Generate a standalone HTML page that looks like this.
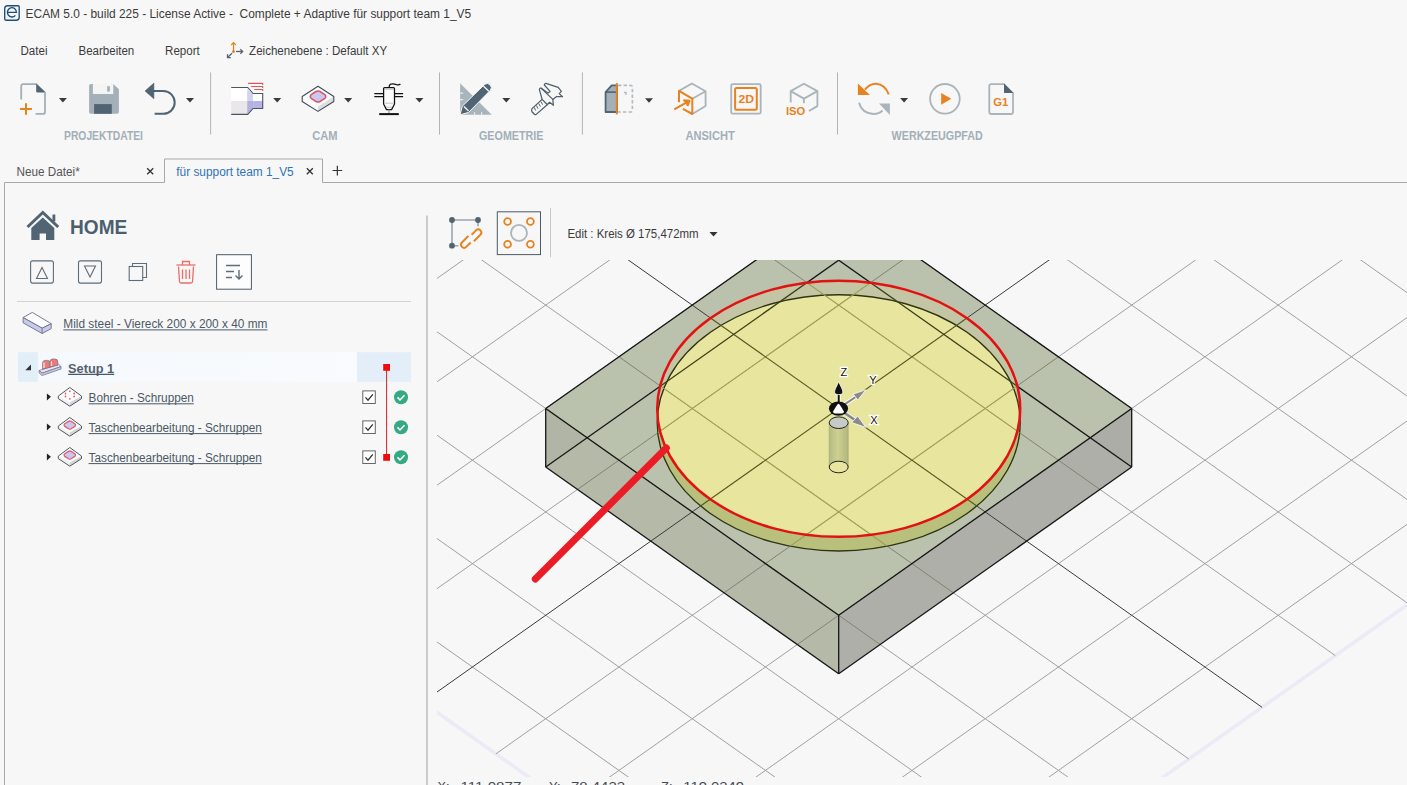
<!DOCTYPE html>
<html><head><meta charset="utf-8"><title>ECAM</title>
<style>
html,body{margin:0;padding:0;}
body{width:1407px;height:785px;overflow:hidden;background:#f7f7f7;position:relative;font-family:"Liberation Sans",sans-serif;}
svg{position:absolute;left:0;top:0;}
text{font-family:"Liberation Sans",sans-serif;}
</style></head>
<body>
<svg width="1407" height="785" viewBox="0 0 1407 785">
<defs>
<linearGradient id="cylg" x1="0" x2="1" y1="0" y2="0">
<stop offset="0" stop-color="#b5bb80"/><stop offset="0.45" stop-color="#cdd092"/><stop offset="1" stop-color="#b2b77c"/>
</linearGradient>
<linearGradient id="setupg" x1="0" x2="1" y1="0" y2="0">
<stop offset="0" stop-color="#f5f9fd"/><stop offset="1" stop-color="#f9fbfe"/>
</linearGradient>
</defs>
<defs>
<clipPath id="vp"><rect x="437" y="260" width="970" height="517"/></clipPath>
<clipPath id="boxsil"><polygon points="545.70,408.50 838.70,201.70 1131.70,408.50 1131.70,467.00 838.70,673.80 545.70,467.00"/></clipPath>
<clipPath id="redc"><ellipse cx="838.7" cy="408.75" rx="181.5" ry="128.1"/></clipPath>
<clipPath id="pock"><ellipse cx="838.7" cy="408.75" rx="181.5" ry="128.1"/><ellipse cx="838.7" cy="422.85" rx="181.5" ry="128.1"/></clipPath>
<mask id="nopock" maskUnits="userSpaceOnUse" x="0" y="0" width="1407" height="785"><rect x="0" y="0" width="1407" height="785" fill="#fff"/><ellipse cx="838.7" cy="408.75" rx="181.5" ry="128.1" fill="#000"/><ellipse cx="838.7" cy="422.85" rx="181.5" ry="128.1" fill="#000"/></mask>
</defs>
<g clip-path="url(#vp)">
<line x1="2.92" y1="405.91" x2="846.03" y2="1000.98" stroke="#ebebf7" stroke-width="3.6" />
<line x1="846.03" y1="1000.98" x2="1681.81" y2="411.08" stroke="#ebebf7" stroke-width="3.6" />
<line x1="52.73" y1="370.76" x2="895.84" y2="965.83" stroke="#a0a0a0" stroke-width="1.0" />
<line x1="125.98" y1="319.06" x2="969.09" y2="914.13" stroke="#a0a0a0" stroke-width="1.0" />
<line x1="199.23" y1="267.36" x2="1042.34" y2="862.43" stroke="#a0a0a0" stroke-width="1.0" />
<line x1="272.48" y1="215.66" x2="1115.59" y2="810.73" stroke="#a0a0a0" stroke-width="1.0" />
<line x1="345.73" y1="163.96" x2="1188.84" y2="759.03" stroke="#a0a0a0" stroke-width="1.0" />
<line x1="492.23" y1="60.56" x2="1335.34" y2="655.63" stroke="#a0a0a0" stroke-width="1.0" />
<line x1="565.48" y1="8.86" x2="1408.59" y2="603.93" stroke="#a0a0a0" stroke-width="1.0" />
<line x1="638.73" y1="-42.84" x2="1481.84" y2="552.23" stroke="#a0a0a0" stroke-width="1.0" />
<line x1="711.98" y1="-94.54" x2="1555.09" y2="500.53" stroke="#a0a0a0" stroke-width="1.0" />
<line x1="785.23" y1="-146.24" x2="1628.34" y2="448.83" stroke="#a0a0a0" stroke-width="1.0" />
<line x1="56.39" y1="443.66" x2="892.17" y2="-146.24" stroke="#a0a0a0" stroke-width="1.0" />
<line x1="129.64" y1="495.36" x2="965.42" y2="-94.54" stroke="#a0a0a0" stroke-width="1.0" />
<line x1="202.89" y1="547.06" x2="1038.67" y2="-42.84" stroke="#a0a0a0" stroke-width="1.0" />
<line x1="276.14" y1="598.76" x2="1111.92" y2="8.86" stroke="#a0a0a0" stroke-width="1.0" />
<line x1="349.39" y1="650.46" x2="1185.17" y2="60.56" stroke="#a0a0a0" stroke-width="1.0" />
<line x1="495.89" y1="753.86" x2="1331.67" y2="163.96" stroke="#a0a0a0" stroke-width="1.0" />
<line x1="569.14" y1="805.56" x2="1404.92" y2="215.66" stroke="#a0a0a0" stroke-width="1.0" />
<line x1="642.39" y1="857.26" x2="1478.17" y2="267.36" stroke="#a0a0a0" stroke-width="1.0" />
<line x1="715.64" y1="908.96" x2="1551.42" y2="319.06" stroke="#a0a0a0" stroke-width="1.0" />
<line x1="788.89" y1="960.66" x2="1624.67" y2="370.76" stroke="#a0a0a0" stroke-width="1.0" />
<polygon points="545.70,408.50 838.70,201.70 1131.70,408.50 838.70,615.30" fill="#bac1ac" />
<polygon points="545.70,408.50 838.70,615.30 838.70,673.80 545.70,467.00" fill="#b5baa8" />
<polygon points="545.70,408.50 587.14,437.75 545.70,467.00" fill="#b1b5a5" />
<polygon points="838.70,615.30 1131.70,408.50 1131.70,467.00 838.70,673.80" fill="#afafa9" />
<polygon points="1131.70,408.50 1090.26,437.75 1131.70,467.00" fill="#adada7" />
<g clip-path="url(#boxsil)"><line x1="52.73" y1="370.76" x2="895.84" y2="965.83" stroke="#80846f" stroke-width="1" />
<line x1="125.98" y1="319.06" x2="969.09" y2="914.13" stroke="#80846f" stroke-width="1" />
<line x1="199.23" y1="267.36" x2="1042.34" y2="862.43" stroke="#80846f" stroke-width="1" />
<line x1="272.48" y1="215.66" x2="1115.59" y2="810.73" stroke="#80846f" stroke-width="1" />
<line x1="345.73" y1="163.96" x2="1188.84" y2="759.03" stroke="#80846f" stroke-width="1" />
<line x1="492.23" y1="60.56" x2="1335.34" y2="655.63" stroke="#80846f" stroke-width="1" />
<line x1="565.48" y1="8.86" x2="1408.59" y2="603.93" stroke="#80846f" stroke-width="1" />
<line x1="638.73" y1="-42.84" x2="1481.84" y2="552.23" stroke="#80846f" stroke-width="1" />
<line x1="711.98" y1="-94.54" x2="1555.09" y2="500.53" stroke="#80846f" stroke-width="1" />
<line x1="785.23" y1="-146.24" x2="1628.34" y2="448.83" stroke="#80846f" stroke-width="1" />
<line x1="56.39" y1="443.66" x2="892.17" y2="-146.24" stroke="#80846f" stroke-width="1" />
<line x1="129.64" y1="495.36" x2="965.42" y2="-94.54" stroke="#80846f" stroke-width="1" />
<line x1="202.89" y1="547.06" x2="1038.67" y2="-42.84" stroke="#80846f" stroke-width="1" />
<line x1="276.14" y1="598.76" x2="1111.92" y2="8.86" stroke="#80846f" stroke-width="1" />
<line x1="349.39" y1="650.46" x2="1185.17" y2="60.56" stroke="#80846f" stroke-width="1" />
<line x1="495.89" y1="753.86" x2="1331.67" y2="163.96" stroke="#80846f" stroke-width="1" />
<line x1="569.14" y1="805.56" x2="1404.92" y2="215.66" stroke="#80846f" stroke-width="1" />
<line x1="642.39" y1="857.26" x2="1478.17" y2="267.36" stroke="#80846f" stroke-width="1" />
<line x1="715.64" y1="908.96" x2="1551.42" y2="319.06" stroke="#80846f" stroke-width="1" />
<line x1="788.89" y1="960.66" x2="1624.67" y2="370.76" stroke="#80846f" stroke-width="1" /></g>
<ellipse cx="838.7" cy="408.75" rx="181.5" ry="128.1" fill="#c3c5a4"/>
<ellipse cx="838.7" cy="422.85" rx="181.5" ry="128.1" fill="#b8c07c"/>
<g clip-path="url(#redc)"><ellipse cx="838.7" cy="422.85" rx="181.5" ry="128.1" fill="#e8e69e"/></g>
<g clip-path="url(#pock)"><line x1="52.73" y1="370.76" x2="895.84" y2="965.83" stroke="#adad70" stroke-width="1" />
<line x1="125.98" y1="319.06" x2="969.09" y2="914.13" stroke="#adad70" stroke-width="1" />
<line x1="199.23" y1="267.36" x2="1042.34" y2="862.43" stroke="#adad70" stroke-width="1" />
<line x1="272.48" y1="215.66" x2="1115.59" y2="810.73" stroke="#adad70" stroke-width="1" />
<line x1="345.73" y1="163.96" x2="1188.84" y2="759.03" stroke="#adad70" stroke-width="1" />
<line x1="492.23" y1="60.56" x2="1335.34" y2="655.63" stroke="#adad70" stroke-width="1" />
<line x1="565.48" y1="8.86" x2="1408.59" y2="603.93" stroke="#adad70" stroke-width="1" />
<line x1="638.73" y1="-42.84" x2="1481.84" y2="552.23" stroke="#adad70" stroke-width="1" />
<line x1="711.98" y1="-94.54" x2="1555.09" y2="500.53" stroke="#adad70" stroke-width="1" />
<line x1="785.23" y1="-146.24" x2="1628.34" y2="448.83" stroke="#adad70" stroke-width="1" />
<line x1="56.39" y1="443.66" x2="892.17" y2="-146.24" stroke="#adad70" stroke-width="1" />
<line x1="129.64" y1="495.36" x2="965.42" y2="-94.54" stroke="#adad70" stroke-width="1" />
<line x1="202.89" y1="547.06" x2="1038.67" y2="-42.84" stroke="#adad70" stroke-width="1" />
<line x1="276.14" y1="598.76" x2="1111.92" y2="8.86" stroke="#adad70" stroke-width="1" />
<line x1="349.39" y1="650.46" x2="1185.17" y2="60.56" stroke="#adad70" stroke-width="1" />
<line x1="495.89" y1="753.86" x2="1331.67" y2="163.96" stroke="#adad70" stroke-width="1" />
<line x1="569.14" y1="805.56" x2="1404.92" y2="215.66" stroke="#adad70" stroke-width="1" />
<line x1="642.39" y1="857.26" x2="1478.17" y2="267.36" stroke="#adad70" stroke-width="1" />
<line x1="715.64" y1="908.96" x2="1551.42" y2="319.06" stroke="#adad70" stroke-width="1" />
<line x1="788.89" y1="960.66" x2="1624.67" y2="370.76" stroke="#adad70" stroke-width="1" /></g>
<ellipse cx="838.7" cy="422.85" rx="181.5" ry="128.1" fill="none" stroke="#2f3412" stroke-width="1.35"/>
<g mask="url(#nopock)"><line x1="418.98" y1="112.26" x2="1262.09" y2="707.33" stroke="#3a3a3a" stroke-width="1.0" />
<line x1="422.64" y1="702.16" x2="1258.42" y2="112.26" stroke="#3a3a3a" stroke-width="1.0" /></g>
<line x1="545.70" y1="408.50" x2="838.70" y2="201.70" stroke="#161616" stroke-width="1.3" />
<line x1="838.70" y1="201.70" x2="1131.70" y2="408.50" stroke="#161616" stroke-width="1.3" />
<line x1="1131.70" y1="408.50" x2="838.70" y2="615.30" stroke="#161616" stroke-width="1.3" />
<line x1="838.70" y1="615.30" x2="545.70" y2="408.50" stroke="#161616" stroke-width="1.3" />
<line x1="1131.70" y1="467.00" x2="838.70" y2="673.80" stroke="#161616" stroke-width="1.3" />
<line x1="838.70" y1="673.80" x2="545.70" y2="467.00" stroke="#161616" stroke-width="1.3" />
<line x1="545.70" y1="408.50" x2="545.70" y2="467.00" stroke="#161616" stroke-width="1.3" />
<line x1="1131.70" y1="408.50" x2="1131.70" y2="467.00" stroke="#161616" stroke-width="1.3" />
<line x1="838.70" y1="615.30" x2="838.70" y2="673.80" stroke="#161616" stroke-width="1.3" />
<line x1="838.70" y1="201.70" x2="838.70" y2="260.20" stroke="#161616" stroke-width="1.3" />
<g mask="url(#nopock)"><line x1="545.70" y1="467.00" x2="838.70" y2="260.20" stroke="#161616" stroke-width="1.3" /><line x1="838.70" y1="260.20" x2="1131.70" y2="467.00" stroke="#161616" stroke-width="1.3" /></g>
<g clip-path="url(#pock)">
<line x1="52.73" y1="370.76" x2="895.84" y2="965.83" stroke="#a0a158" stroke-width="1.1" />
<line x1="125.98" y1="319.06" x2="969.09" y2="914.13" stroke="#a0a158" stroke-width="1.1" />
<line x1="199.23" y1="267.36" x2="1042.34" y2="862.43" stroke="#a0a158" stroke-width="1.1" />
<line x1="272.48" y1="215.66" x2="1115.59" y2="810.73" stroke="#a0a158" stroke-width="1.1" />
<line x1="345.73" y1="163.96" x2="1188.84" y2="759.03" stroke="#a0a158" stroke-width="1.1" />
<line x1="492.23" y1="60.56" x2="1335.34" y2="655.63" stroke="#a0a158" stroke-width="1.1" />
<line x1="565.48" y1="8.86" x2="1408.59" y2="603.93" stroke="#a0a158" stroke-width="1.1" />
<line x1="638.73" y1="-42.84" x2="1481.84" y2="552.23" stroke="#a0a158" stroke-width="1.1" />
<line x1="711.98" y1="-94.54" x2="1555.09" y2="500.53" stroke="#a0a158" stroke-width="1.1" />
<line x1="785.23" y1="-146.24" x2="1628.34" y2="448.83" stroke="#a0a158" stroke-width="1.1" />
<line x1="56.39" y1="443.66" x2="892.17" y2="-146.24" stroke="#a0a158" stroke-width="1.1" />
<line x1="129.64" y1="495.36" x2="965.42" y2="-94.54" stroke="#a0a158" stroke-width="1.1" />
<line x1="202.89" y1="547.06" x2="1038.67" y2="-42.84" stroke="#a0a158" stroke-width="1.1" />
<line x1="276.14" y1="598.76" x2="1111.92" y2="8.86" stroke="#a0a158" stroke-width="1.1" />
<line x1="349.39" y1="650.46" x2="1185.17" y2="60.56" stroke="#a0a158" stroke-width="1.1" />
<line x1="495.89" y1="753.86" x2="1331.67" y2="163.96" stroke="#a0a158" stroke-width="1.1" />
<line x1="569.14" y1="805.56" x2="1404.92" y2="215.66" stroke="#a0a158" stroke-width="1.1" />
<line x1="642.39" y1="857.26" x2="1478.17" y2="267.36" stroke="#a0a158" stroke-width="1.1" />
<line x1="715.64" y1="908.96" x2="1551.42" y2="319.06" stroke="#a0a158" stroke-width="1.1" />
<line x1="788.89" y1="960.66" x2="1624.67" y2="370.76" stroke="#a0a158" stroke-width="1.1" />
<line x1="418.98" y1="112.26" x2="1262.09" y2="707.33" stroke="#55561f" stroke-width="1.15" />
<line x1="422.64" y1="702.16" x2="1258.42" y2="112.26" stroke="#55561f" stroke-width="1.15" />
<line x1="545.70" y1="467.00" x2="838.70" y2="260.20" stroke="#3c3d16" stroke-width="1.3" />
<line x1="838.70" y1="260.20" x2="1131.70" y2="467.00" stroke="#3c3d16" stroke-width="1.3" />
</g>
<ellipse cx="838.7" cy="408.75" rx="181.5" ry="128.1" fill="none" stroke="#e31212" stroke-width="2.5"/>
<rect x="829.2" y="422.7" width="19" height="44.3" fill="url(#cylg)"/>
<line x1="829.2" y1="422.7" x2="829.2" y2="467" stroke="#9da070" stroke-width="0.6"/>
<line x1="848.2" y1="422.7" x2="848.2" y2="467" stroke="#9da070" stroke-width="0.6"/>
<ellipse cx="838.7" cy="467" rx="9.5" ry="5.8" fill="#e8e69e" stroke="#222" stroke-width="1"/>
<ellipse cx="838.7" cy="422.7" rx="9.5" ry="5.8" fill="#c7cbc6" stroke="#222" stroke-width="1"/>
<line x1="842.7" y1="405.6" x2="857.7" y2="395.6" stroke="#fff" stroke-width="4"/>
<line x1="842.7" y1="405.6" x2="857.7" y2="395.6" stroke="#888" stroke-width="2"/>
<polygon points="865.9000000000001,389.8 853.2,394.1 857.7,400.1" fill="#8a8a8a" stroke="#fff" stroke-width="0.8"/>
<line x1="842.7" y1="411.6" x2="855.7" y2="420.6" stroke="#fff" stroke-width="4"/>
<line x1="842.7" y1="411.6" x2="855.7" y2="420.6" stroke="#888" stroke-width="2.5"/>
<polygon points="865.9000000000001,427.40000000000003 851.7,422.6 857.7,416.1" fill="#8a8a8a" stroke="#fff" stroke-width="0.8"/>
<line x1="838.7" y1="404.6" x2="838.7" y2="392.6" stroke="#fff" stroke-width="4"/>
<line x1="838.7" y1="404.6" x2="838.7" y2="392.6" stroke="#111" stroke-width="2"/>
<path d="M838.7,381.6 C840.2,385.6 842.9000000000001,389.6 842.9000000000001,392.1 C842.9000000000001,394.1 840.7,394.6 838.7,394.6 C836.7,394.6 834.5,394.1 834.5,392.1 C834.5,389.6 837.2,385.6 838.7,381.6Z" fill="#111" stroke="#fff" stroke-width="0.8"/>
<ellipse cx="838.5" cy="408.6" rx="9.6" ry="7.2" fill="#111"/>
<path d="M838.5,403.8 Q839.7,404.0 843.9000000000001,411.6 Q844.2,413.20000000000005 842.2,413.40000000000003 H834.8000000000001 Q832.8000000000001,413.20000000000005 833.1,411.6 Q837.3000000000001,404.0 838.5,403.8 Z" fill="#fff"/>
<text x="840.5" y="376.1" font-family="Liberation Sans" font-size="11" fill="#111" stroke="#fff" stroke-width="2.5" paint-order="stroke">Z</text>
<text x="869.2" y="384.3" font-family="Liberation Sans" font-size="11" fill="#111" stroke="#fff" stroke-width="2.5" paint-order="stroke">Y</text>
<text x="870.2" y="423.6" font-family="Liberation Sans" font-size="11" fill="#111" stroke="#fff" stroke-width="2.5" paint-order="stroke">X</text>
<line x1="535.3" y1="579" x2="666.3" y2="448" stroke="#ec1c26" stroke-width="7" stroke-linecap="round"/>
</g>
<line x1="210.6" y1="72.4" x2="210.6" y2="134.6" stroke="#b4b4b4" stroke-width="1"/><line x1="439.5" y1="72.4" x2="439.5" y2="134.6" stroke="#b4b4b4" stroke-width="1"/><line x1="582.4" y1="72.4" x2="582.4" y2="134.6" stroke="#b4b4b4" stroke-width="1"/><line x1="837.5" y1="72.4" x2="837.5" y2="134.6" stroke="#b4b4b4" stroke-width="1"/><path d="M4.5,785 V182.5 H164.5 V159 H322.5 V182.5 H1407" fill="none" stroke="#a8a8a8" stroke-width="1"/><path d="M147.2,168.3 L153.2,174.3 M153.2,168.3 L147.2,174.3" stroke="#333" stroke-width="1.3"/><path d="M306.8,168.3 L312.8,174.3 M312.8,168.3 L306.8,174.3" stroke="#333" stroke-width="1.3"/><path d="M332.5,170.5 H342.2 M337.35,165.7 V175.4" stroke="#333" stroke-width="1.2"/><line x1="427" y1="215.4" x2="427" y2="785" stroke="#c0c0c0" stroke-width="1.6"/>
<g fill="none" stroke="#1b4f7a" stroke-width="1.35"><path d="M7.6,5.7 H18.1 Q19.2,5.7 19.2,6.8 V17.2 Q19.2,20.2 16.2,20.2 H5.8 Q4.7,20.2 4.7,19.1 V8.6 Q4.7,5.7 7.6,5.7 Z"/><path d="M7.4,12.4 H16.4 A4.5,4.7 0 1 0 15.4,15.3"/></g>
<g fill="none" stroke-width="1.2"><line x1="233.5" y1="43" x2="233.5" y2="51.5" stroke="#e8811f"/><polyline points="231.2,45 233.5,42.6 235.8,45" stroke="#e8811f"/><circle cx="233.5" cy="51.5" r="1.5" fill="#e8811f" stroke="none"/><line x1="236" y1="51.5" x2="242.5" y2="51.5" stroke="#55646f" stroke-width="1.3"/><polyline points="240.3,49.3 242.6,51.5 240.3,53.7" stroke="#55646f" stroke-width="1.3"/><line x1="232" y1="53.2" x2="227.8" y2="57.3" stroke="#55646f"/><polyline points="227.5,54.3 227.5,57.6 230.8,57.6" stroke="#55646f" stroke-width="1.3"/></g>
<g><path d="M21.2,99.4 V86.2 Q21.2,84.2 23.2,84.2 H36.5" fill="none" stroke="#a3afb7" stroke-width="1.8"/><path d="M36.2,83.3 L45.8,92.6 H37.6 Q36.2,92.6 36.2,91.2 Z" fill="#506473"/><path d="M45,92 V111.9 Q45,113.9 43,113.9 H35.6" fill="none" stroke="#a3afb7" stroke-width="1.8"/><path d="M20.1,108.9 H31.9 M26,103.2 V114.7" stroke="#e8811f" stroke-width="2"/></g>
<polygon points="58.9,98 66.9,98 62.9,102.5" fill="#3a3a3a"/>
<g><path d="M90.8,84 H113.3 L118.9,89.3 V112 Q118.9,113.8 117.1,113.8 H90.9 Q89.1,113.8 89.1,112 V85.8 Q89.1,84 90.8,84 Z" fill="#a4b0b8"/><rect x="92.9" y="84" width="20.4" height="10" fill="#f4f4f4"/><rect x="107.2" y="86.2" width="2.7" height="5.4" fill="#a4b0b8"/><rect x="94.1" y="104.1" width="17.7" height="9.7" fill="#506473"/></g>
<g><path d="M152.5,91 H163.3 A11.4,11.4 0 0 1 163.3,113.8 H154.6" fill="none" stroke="#506473" stroke-width="2"/><path d="M145,91 L153.9,83.1 V98.8 Z" fill="#506473" stroke="#506473" stroke-width="0.6" stroke-linejoin="round"/></g>
<polygon points="186,98 194,98 190,102.5" fill="#3a3a3a"/>
<g><rect x="231.2" y="87.5" width="16" height="13.5" fill="#ffffff"/><rect x="231.2" y="101" width="16" height="13.4" fill="#e9e7ea"/><path d="M247.2,89.5 L253.1,94 V101 H247.2 Z" fill="#d4d3ef"/><path d="M247.2,101 H253.1 V108.5 L247.2,114 Z" fill="#b3b1e2"/><rect x="253.1" y="93.5" width="9.6" height="7.5" fill="#ffffff"/><rect x="253.1" y="101" width="9.6" height="7.5" fill="#b6b4e6"/><path d="M231.2,87.5 H247.7 L253.1,93.5 H262.7 V108.5 H253.1 L247.7,114.4 H231.2" fill="none" stroke="#4a5662" stroke-width="1.1"/><path d="M248,83.4 H262.7 V85 M251.2,86.5 H262.7 V88 M254.2,89.5 H262.7 V91" fill="none" stroke="#d85a5a" stroke-width="1.1"/></g>
<polygon points="273.2,98 281.2,98 277.2,102.5" fill="#3a3a3a"/>
<g><path d="M318,86.3 L333.8,96.5 V101.5 L318,111.4 L302.2,101.5 V96.5 Z" fill="#fefefe"/><path d="M318,106.6 L333.8,96.5 V101.5 L318,111.4 Z" fill="#dedede"/><path d="M318,86.3 L333.8,96.5 V101.5 L318,111.4 L302.2,101.5 V96.5 Z" fill="none" stroke="#3f4b56" stroke-width="1.1" stroke-linejoin="round"/><path d="M311.2,94.5 Q309.2,96.5 311.2,98.5 L316,101.5 Q318,102.6 320,101.5 L324.8,98.5 Q326.8,96.5 324.8,94.5 L320,91.5 Q318,90.3 316,91.5 Z" fill="#c9c8f0" stroke="#e05566" stroke-width="1.5"/></g>
<polygon points="344.2,98 352.2,98 348.2,102.5" fill="#3a3a3a"/>
<g fill="none" stroke="#111" stroke-width="1.25" stroke-linejoin="round"><path d="M383.6,104 V88.5 Q383.6,87.5 384.6,87.5 H393.5 Q394.5,87.5 394.5,88.5 V104 L391.6,109.6 H386.5 Z" fill="#fcfcfc"/><path d="M384.3,89.3 H393.8 M384.3,103.2 H393.8 M386,107.2 H392" stroke="#b8b8b8" stroke-width="0.8"/><path d="M374.3,93.5 H383.6 M374.3,96.5 H383.6 M394.5,93.5 H403.1 M394.5,96.5 H403.1"/><path d="M389.1,87.5 Q389,84 392,83.8 Q394,83.6 396.5,84.6 Q399,85.3 400.4,84"/><path d="M389,109.6 V113.5" stroke="#999"/><path d="M379.2,114.1 H398.8" stroke-width="2"/></g>
<polygon points="415.4,98 423.4,98 419.4,102.5" fill="#3a3a3a"/>
<g><path d="M460.1,83.3 V114.8 H491.8 Z" fill="#a9b5bd"/><path d="M460.1,93.1 H463.2 M460.1,99.7 H463.2 M474.6,114.8 V112.3 M481.6,114.8 V112.3" stroke="#f7f7f7" stroke-width="1"/><path d="M460.1,114.8 L462.3,106.2 L484.6,84.4 Q487.4,82.2 490,84.8 Q492.6,87.6 490.4,90.2 L468.6,112.4 Z" fill="#506473" stroke="#f7f7f7" stroke-width="1"/><path d="M464,106.5 L468.5,111 M483.4,86 L488.8,91.3" stroke="#f7f7f7" stroke-width="1.3"/></g>
<polygon points="502.3,98 510.3,98 506.3,102.5" fill="#3a3a3a"/>
<g fill="none" stroke="#4f5f6b" stroke-width="1.25" stroke-linejoin="round" stroke-linecap="round"><path d="M532,108.6 L542.1,99.4 L539.4,89.6 Q539.6,87.6 541.3,88.2 L548,93 L550.1,91.4 L544.3,85 Q544.8,83.2 546,83.4 L558.2,87.4 L561.4,91.4 L559.2,93.6 L562.5,96.7 L556.6,96.5 L552.8,99.4 L553.4,105.3 L549.6,102.3 L547.2,104.8 L536.2,114.4 Q535.3,115 534.4,114.3 L532,111.8 Q531.2,110.2 532,108.6 Z"/><path d="M542.1,99.4 L547.2,104.5 M541.3,88.4 L552.8,99.4"/><path d="M534.4,107.7 L535.5,110.2 M536.6,105.8 L537.8,108.3 M538.9,103.8 L540.2,106.2 M541.1,101.9 L542.4,104.3" stroke-width="1"/></g>
<g><path d="M605.6,92.1 L611.7,85.4 H617 V112 H605.6 Z" fill="#a4b0b8" stroke="#506473" stroke-width="1.8" stroke-linejoin="round"/><path d="M605.6,92.1 H617" stroke="#506473" stroke-width="1.6"/><path d="M618,85.4 H630.5 Q632.4,85.4 632.4,87.3 V110 Q632.4,112 630.5,112 H618" fill="none" stroke="#b3bbc1" stroke-width="1.7" stroke-dasharray="3.4 2.2"/><path d="M624,92.5 H626 V95" fill="none" stroke="#b3bbc1" stroke-width="1.3"/><line x1="616.8" y1="83.1" x2="616.8" y2="114.4" stroke="#e8811f" stroke-width="2"/></g>
<polygon points="645,98.2 653,98.2 649,102.7" fill="#3a3a3a"/>
<g fill="none" stroke-width="1.8" stroke-linejoin="round"><path d="M679,90.9 L691.9,83.5 L705.6,91.3 V106.1 L692.3,114 M692.3,98.7 L705.6,91.3" stroke="#a9b4bb"/><path d="M679,102.2 V90.9 L692.3,98.7 V114 L682.9,108.9" stroke="#e8811f" stroke-width="2"/><path d="M674.3,109.3 L688,101.6" stroke="#e8811f" stroke-width="2"/><path d="M683.3,100.3 L689.5,100.8 L687.3,106" stroke="#e8811f" stroke-width="2" fill="#e8811f"/></g>
<g><rect x="731.2" y="84.2" width="29.5" height="29.5" rx="1.5" fill="none" stroke="#a9b4bb" stroke-width="1.8"/><rect x="735.1" y="88.1" width="21.7" height="21.7" rx="1.5" fill="none" stroke="#e8811f" stroke-width="2"/><text x="738.5" y="103.2" font-size="11.2" font-weight="bold" fill="#e8811f" textLength="15.6" lengthAdjust="spacingAndGlyphs">2D</text></g>
<g><path d="M790.7,102.5 V91.1 L803.9,83.7 L817.4,91.1 V106.1 L808.9,111 M790.7,91.1 L803.9,98.6 L817.4,91.1 M803.9,98.6 V103.2" fill="none" stroke="#a9b4bb" stroke-width="1.8" stroke-linejoin="round"/><text x="786" y="114.6" font-size="10.9" font-weight="bold" fill="#e8811f" textLength="19.3" lengthAdjust="spacingAndGlyphs">ISO</text></g>
<g fill="none"><path d="M865,89.5 Q870,83.6 876,83.8 Q885,84.5 888.7,94.3" stroke="#e8811f" stroke-width="2"/><path d="M857.9,83.4 V94.9 H869.9 Z" fill="#e8811f"/><path d="M859,102.8 Q862,113.5 873.5,114 Q879,114 882.5,110.5" stroke="#a9b4bb" stroke-width="2"/><path d="M879,103.4 H889.9 V114.9 Z" fill="#a9b4bb"/></g>
<polygon points="900.1,98 908.1,98 904.1,102.5" fill="#3a3a3a"/>
<g><circle cx="944.9" cy="98.8" r="14.8" fill="none" stroke="#a9b4bb" stroke-width="1.8"/><path d="M941.2,93.1 L951.3,98.8 L941.2,104.8 Z" fill="#e8811f"/></g>
<g><path d="M1004.3,84.1 H991.2 Q989.3,84.1 989.3,86 V112.1 Q989.3,114 991.2,114 H1011.1 Q1013,114 1013,112.1 V92.5" fill="none" stroke="#a9b4bb" stroke-width="1.8"/><path d="M1004,83.3 L1013.7,93.1 H1005.2 Q1004,93.1 1004,91.9 Z" fill="#506473"/><text x="993.2" y="106" font-size="10.5" font-weight="bold" fill="#e8811f" textLength="15.1" lengthAdjust="spacingAndGlyphs">G1</text></g>
<g><path d="M27.5,227 L42.8,212.5 L58.2,227" fill="none" stroke="#506473" stroke-width="3" stroke-linejoin="miter"/><rect x="52.5" y="214.5" width="2.8" height="7" fill="#506473"/><path d="M31.3,228 L42.8,217.4 L54.3,228 V240 H46 V233.5 H39.6 V240 H31.3 Z" fill="#506473"/></g>
<g fill="none" stroke="#5d6d79" stroke-width="1.1"><rect x="30.6" y="260.9" width="22.8" height="22.2" rx="2"/><path d="M36.5,278.5 H47.5 L42,267.5 Z"/><rect x="78.5" y="260.9" width="23" height="22.2" rx="2"/><path d="M84.5,266 H95.5 L90,277 Z"/><rect x="129.2" y="266.5" width="13.5" height="14"/><path d="M132.5,266.5 V263.5 H146.5 V277.5 H142.7"/></g>
<g fill="none" stroke="#ea6e6a" stroke-width="1.3"><path d="M176.5,265 H195.5"/><path d="M182.5,265 V261.5 H189.5 V265"/><path d="M178.5,266.5 L179.5,281.8 Q179.6,283 181,283 H191 Q192.4,283 192.5,281.8 L193.5,266.5"/><path d="M182.5,269.5 V279 M186,269.5 V279 M189.5,269.5 V279"/></g>
<g><rect x="216.6" y="254.7" width="34.8" height="34.5" fill="#fdfdfd" stroke="#4d5b66" stroke-width="1"/><path d="M226,265.5 H240 M226,271.5 H234 M226,277.5 H232" stroke="#5d6d79" stroke-width="1.4"/><path d="M239,270 V279 M235.5,275.5 L239,279 L242.5,275.5" fill="none" stroke="#5d6d79" stroke-width="1.4"/></g>
<line x1="17" y1="301.5" x2="411" y2="301.5" stroke="#d2d2d2" stroke-width="1"/>
<g stroke="#6a7080" stroke-width="0.9" stroke-linejoin="round"><path d="M23.1,317.5 L32.3,312.4 L51.2,323.7 L42.1,328.2 Z" fill="#fdfdff"/><path d="M23.1,317.5 L42.1,328.2 L51.2,323.7 V328.6 L42.1,333.5 L23.1,322.8 Z" fill="#c9c9f0"/><path d="M42.1,328.2 V333.5" fill="none"/></g>
<rect x="18" y="352.2" width="393" height="29.6" fill="url(#setupg)"/>
<rect x="18" y="352.2" width="19.8" height="29.6" fill="#e2eef8"/>
<rect x="357" y="352.2" width="54" height="29.6" fill="#e3eef8"/>
<path d="M31,364.5 V370.3 H25.3 Z" fill="#333"/>
<g stroke="#6a6f80" stroke-width="0.7" stroke-linejoin="round"><path d="M39,370.5 L58.5,364.2 L61,366.6 L42,373.2 Z" fill="#e4e4f4"/><path d="M39,370.5 V372.8 L42,375.6 L61,369 V366.6 L42,373.2 Z" fill="#c8c8ea"/><path d="M42.6,369.2 V363.2 Q42.6,360.4 45.2,360.4 H47.6 Q50.3,360.4 50.3,363.2 V367.2 Z" fill="#f07878"/><path d="M50,367.2 V361.9 Q50,359 52.6,359 H55 Q57.8,359 57.8,361.9 V365.2 Z" fill="#f07878"/><path d="M44,362.5 V368 M51.4,361.2 V366" stroke="#fde8e8" stroke-width="1.2"/></g>
<path d="M46.9,393.5 L50.9,396.8 L46.9,400.4 Z" fill="#222"/>
<path d="M58.3,396.1 L69.8,387.5 L81.5,396.1 V398.6 L69.8,406.2 L58.3,398.6 Z" fill="#fdfdfd"/>
<path d="M58.3,396.1 L69.8,402.6 V406.2 L58.3,398.6 Z" fill="#efefef"/>
<path d="M69.8,402.6 L81.5,396.1 V398.6 L69.8,406.2 Z" fill="#d4d4d4"/>
<path d="M58.3,396.1 L69.8,387.5 L81.5,396.1 V398.6 L69.8,406.2 L58.3,398.6 Z" fill="none" stroke="#4f5862" stroke-width="1" stroke-linejoin="round"/>
<circle cx="69.8" cy="391.3" r="0.9" fill="#e26060"/>
<circle cx="65.5" cy="393.5" r="0.9" fill="#e26060"/>
<circle cx="74.1" cy="393.5" r="0.9" fill="#e26060"/>
<circle cx="65.5" cy="396.5" r="0.9" fill="#e26060"/>
<circle cx="74.1" cy="396.5" r="0.9" fill="#e26060"/>
<circle cx="69.8" cy="398.8" r="0.9" fill="#e26060"/>
<rect x="362.8" y="390.9" width="12.5" height="12.6" fill="#fff" stroke="#666" stroke-width="1"/>
<path d="M365.5,397.4 L368,400.2 L372.8,394.4" fill="none" stroke="#333" stroke-width="1.3"/>
<circle cx="401" cy="397.2" r="7" fill="#35a884"/>
<path d="M397.5,397.4 L400,399.9 L404.5,395.2" fill="none" stroke="#fff" stroke-width="1.5"/>
<path d="M46.9,423.5 L50.9,426.8 L46.9,430.4 Z" fill="#222"/>
<path d="M58.3,426.1 L69.8,417.5 L81.5,426.1 V428.6 L69.8,436.2 L58.3,428.6 Z" fill="#fdfdfd"/>
<path d="M58.3,426.1 L69.8,432.6 V436.2 L58.3,428.6 Z" fill="#efefef"/>
<path d="M69.8,432.6 L81.5,426.1 V428.6 L69.8,436.2 Z" fill="#d4d4d4"/>
<path d="M58.3,426.1 L69.8,417.5 L81.5,426.1 V428.6 L69.8,436.2 L58.3,428.6 Z" fill="none" stroke="#4f5862" stroke-width="1" stroke-linejoin="round"/>
<path d="M64.8,423.8 Q63.4,425.1 64.8,426.4 L68.5,428.8 Q69.8,429.6 71.1,428.8 L74.8,426.4 Q76.2,425.1 74.8,423.8 L71.1,421.4 Q69.8,420.6 68.5,421.4 Z" fill="#c9c8f0" stroke="#e06070" stroke-width="1.3"/>
<rect x="362.8" y="420.9" width="12.5" height="12.6" fill="#fff" stroke="#666" stroke-width="1"/>
<path d="M365.5,427.4 L368,430.2 L372.8,424.4" fill="none" stroke="#333" stroke-width="1.3"/>
<circle cx="401" cy="427.2" r="7" fill="#35a884"/>
<path d="M397.5,427.4 L400,429.9 L404.5,425.2" fill="none" stroke="#fff" stroke-width="1.5"/>
<path d="M46.9,453.5 L50.9,456.8 L46.9,460.4 Z" fill="#222"/>
<path d="M58.3,456.1 L69.8,447.5 L81.5,456.1 V458.6 L69.8,466.2 L58.3,458.6 Z" fill="#fdfdfd"/>
<path d="M58.3,456.1 L69.8,462.6 V466.2 L58.3,458.6 Z" fill="#efefef"/>
<path d="M69.8,462.6 L81.5,456.1 V458.6 L69.8,466.2 Z" fill="#d4d4d4"/>
<path d="M58.3,456.1 L69.8,447.5 L81.5,456.1 V458.6 L69.8,466.2 L58.3,458.6 Z" fill="none" stroke="#4f5862" stroke-width="1" stroke-linejoin="round"/>
<path d="M64.8,453.8 Q63.4,455.1 64.8,456.4 L68.5,458.8 Q69.8,459.6 71.1,458.8 L74.8,456.4 Q76.2,455.1 74.8,453.8 L71.1,451.4 Q69.8,450.6 68.5,451.4 Z" fill="#c9c8f0" stroke="#e06070" stroke-width="1.3"/>
<rect x="362.8" y="450.9" width="12.5" height="12.6" fill="#fff" stroke="#666" stroke-width="1"/>
<path d="M365.5,457.4 L368,460.2 L372.8,454.4" fill="none" stroke="#333" stroke-width="1.3"/>
<circle cx="401" cy="457.2" r="7" fill="#35a884"/>
<path d="M397.5,457.4 L400,459.9 L404.5,455.2" fill="none" stroke="#fff" stroke-width="1.5"/>
<line x1="386.6" y1="367" x2="386.6" y2="457.5" stroke="#d42020" stroke-width="1"/>
<rect x="383.2" y="364" width="6.8" height="6.8" fill="#f00a0a"/>
<rect x="383.2" y="454" width="6.8" height="6.8" fill="#f00a0a"/>
<g><path d="M452,245.7 V220 H478 V226.2 M452,245.7 H458.4" fill="none" stroke="#9aa5ad" stroke-width="1.6"/><circle cx="452" cy="220" r="2.9" fill="#506473"/><circle cx="478" cy="220" r="2.9" fill="#506473"/><circle cx="452" cy="245.7" r="2.9" fill="#506473"/><g transform="translate(466.9,241.9) rotate(-45)"><path d="M5.2,-3.1 H-4 A3.1,3.1 0 0 0 -4,3.1 H2.2" fill="none" stroke="#e8811f" stroke-width="1.9"/></g><g transform="translate(475.4,235.4) rotate(-45)"><path d="M-5.2,3.1 H4 A3.1,3.1 0 0 0 4,-3.1 H-2.2" fill="none" stroke="#e8811f" stroke-width="1.9"/></g></g>
<g><rect x="497.3" y="211.8" width="43.2" height="42.8" fill="#f7f7f7" stroke="#4d5b66" stroke-width="1"/><g fill="none" stroke="#e8811f" stroke-width="1.8"><circle cx="507.6" cy="221.5" r="3.4"/><circle cx="530.4" cy="221.5" r="3.4"/><circle cx="507.6" cy="244.3" r="3.4"/><circle cx="530.4" cy="244.3" r="3.4"/></g><circle cx="519" cy="232.9" r="8" fill="none" stroke="#a9b4bb" stroke-width="1.8"/></g>
<line x1="550.5" y1="208" x2="550.5" y2="257.2" stroke="#c8c8c8" stroke-width="1"/>
<polygon points="709.5,232 717.5,232 713.5,236.5" fill="#333"/>
<text x="25.6" y="18" font-size="12" fill="#3b3b3b" font-weight="normal" textLength="445.5" lengthAdjust="spacingAndGlyphs" >ECAM 5.0 - build 225 - License Active -  Complete + Adaptive für support team 1_V5</text>
<text x="20.5" y="54.9" font-size="12" fill="#3b3b3b" font-weight="normal" textLength="27" lengthAdjust="spacingAndGlyphs" >Datei</text>
<text x="78.5" y="54.9" font-size="12" fill="#3b3b3b" font-weight="normal" textLength="55.7" lengthAdjust="spacingAndGlyphs" >Bearbeiten</text>
<text x="165.1" y="54.9" font-size="12" fill="#3b3b3b" font-weight="normal" textLength="34.7" lengthAdjust="spacingAndGlyphs" >Report</text>
<text x="249.1" y="54.9" font-size="12" fill="#3b3b3b" font-weight="normal" textLength="138.1" lengthAdjust="spacingAndGlyphs" >Zeichenebene : Default XY</text>
<text x="64" y="139.7" font-size="12.6" fill="#a2afb8" font-weight="bold" textLength="79" lengthAdjust="spacingAndGlyphs" >PROJEKTDATEI</text>
<text x="312.3" y="139.7" font-size="12.6" fill="#a2afb8" font-weight="bold" textLength="25.3" lengthAdjust="spacingAndGlyphs" >CAM</text>
<text x="479" y="139.7" font-size="12.6" fill="#a2afb8" font-weight="bold" textLength="64.5" lengthAdjust="spacingAndGlyphs" >GEOMETRIE</text>
<text x="685.4" y="139.7" font-size="12.6" fill="#a2afb8" font-weight="bold" textLength="49.4" lengthAdjust="spacingAndGlyphs" >ANSICHT</text>
<text x="891.6" y="139.7" font-size="12.6" fill="#a2afb8" font-weight="bold" textLength="91.2" lengthAdjust="spacingAndGlyphs" >WERKZEUGPFAD</text>
<text x="16.6" y="176" font-size="12" fill="#555" font-weight="normal" textLength="63.2" lengthAdjust="spacingAndGlyphs" >Neue Datei*</text>
<text x="176.3" y="176" font-size="12" fill="#2f73b3" font-weight="normal" textLength="117.4" lengthAdjust="spacingAndGlyphs" >für support team 1_V5</text>
<text x="70.1" y="233.8" font-size="19.5" fill="#4b5f6e" font-weight="bold" textLength="57.2" lengthAdjust="spacingAndGlyphs" >HOME</text>
<text x="63.3" y="327.8" font-size="12" fill="#4b5966" font-weight="normal" textLength="204.2" lengthAdjust="spacingAndGlyphs" >Mild steel - Viereck 200 x 200 x 40 mm</text>
<line x1="63.3" y1="329.9" x2="267.5" y2="329.9" stroke="#4b5966" stroke-width="1"/>
<text x="68.1" y="372.5" font-size="13" fill="#53606c" font-weight="bold" textLength="46.1" lengthAdjust="spacingAndGlyphs" >Setup 1</text>
<line x1="68.1" y1="374.4" x2="114.2" y2="374.4" stroke="#4b5966" stroke-width="1.2"/>
<text x="88.6" y="402.2" font-size="12" fill="#4b5966" font-weight="normal" textLength="105.2" lengthAdjust="spacingAndGlyphs" >Bohren - Schruppen</text>
<line x1="88.6" y1="403.8" x2="193.8" y2="403.8" stroke="#4b5966" stroke-width="1"/>
<text x="88.6" y="432" font-size="12" fill="#4b5966" font-weight="normal" textLength="173.3" lengthAdjust="spacingAndGlyphs" >Taschenbearbeitung - Schruppen</text>
<line x1="88.6" y1="433.6" x2="261.9" y2="433.6" stroke="#4b5966" stroke-width="1"/>
<text x="88.6" y="462" font-size="12" fill="#4b5966" font-weight="normal" textLength="173.3" lengthAdjust="spacingAndGlyphs" >Taschenbearbeitung - Schruppen</text>
<line x1="88.6" y1="463.6" x2="261.9" y2="463.6" stroke="#4b5966" stroke-width="1"/>
<text x="567.4" y="237.8" font-size="12" fill="#3b3b3b" font-weight="normal" textLength="131.2" lengthAdjust="spacingAndGlyphs" >Edit : Kreis Ø 175,472mm</text>
<text x="437.5" y="790.5" font-size="12.5" fill="#3f4a52" font-weight="normal" textLength="12" lengthAdjust="spacingAndGlyphs" >X:</text>
<text x="460.5" y="790.5" font-size="12.5" fill="#3f4a52" font-weight="normal" textLength="60.8" lengthAdjust="spacingAndGlyphs" >111.0877</text>
<text x="549" y="790.5" font-size="12.5" fill="#3f4a52" font-weight="normal" textLength="11.5" lengthAdjust="spacingAndGlyphs" >Y:</text>
<text x="571" y="790.5" font-size="12.5" fill="#3f4a52" font-weight="normal" textLength="54" lengthAdjust="spacingAndGlyphs" >78.4422</text>
<text x="661" y="790.5" font-size="12.5" fill="#3f4a52" font-weight="normal" textLength="11.5" lengthAdjust="spacingAndGlyphs" >Z:</text>
<text x="683.3" y="790.5" font-size="12.5" fill="#3f4a52" font-weight="normal" textLength="60.7" lengthAdjust="spacingAndGlyphs" >119.0249</text>
</svg>
</body></html>
